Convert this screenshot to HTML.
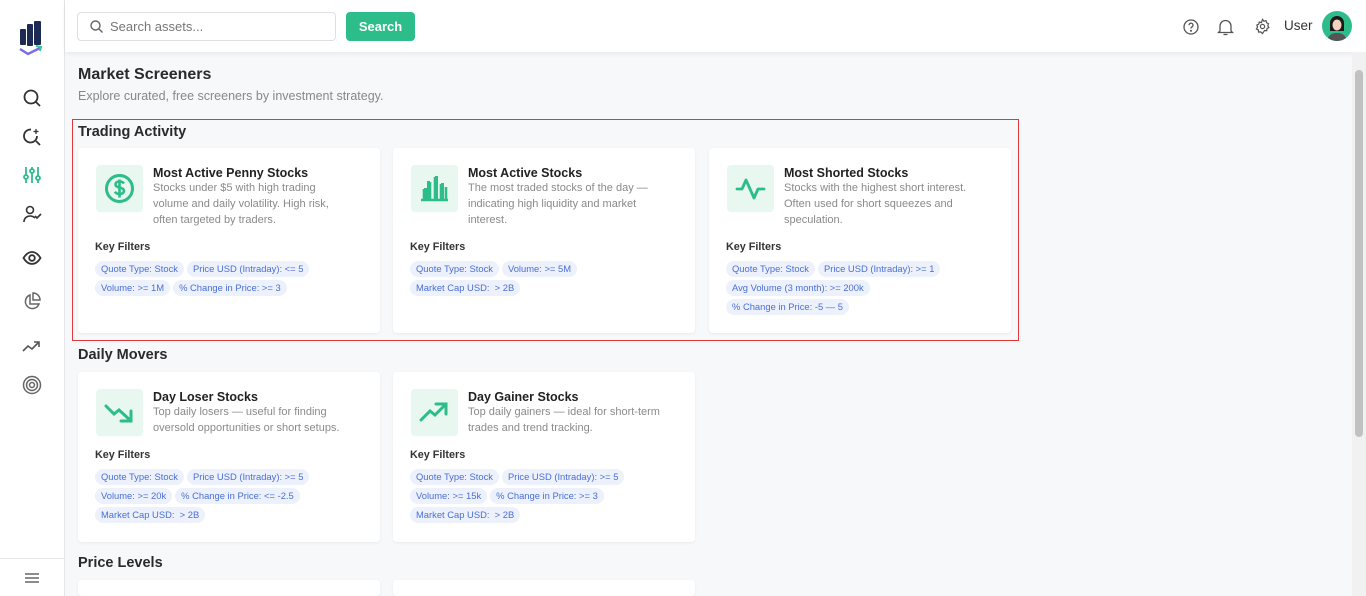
<!DOCTYPE html>
<html><head><style>
*{box-sizing:border-box;margin:0;padding:0}
html{width:1366px;height:596px;overflow:hidden}
body{width:1366px;height:596px;overflow:hidden;font-family:"Liberation Sans",sans-serif;background:#f7f8fa;position:relative;color:#222}
.side{position:absolute;left:0;top:0;width:65px;height:596px;background:#fff;border-right:1px solid #e4e6ea}
.side svg{position:absolute;left:22px}
.top{position:absolute;left:65px;top:0;right:0;height:52px;background:#fff;box-shadow:0 2px 4px rgba(0,0,0,.06)}
.search{position:absolute;left:12px;top:12px;width:259px;height:29px;border:1px solid #dcdfe3;border-radius:4px;font-size:13px;color:#777;padding:6px 0 0 32px}
.btn{position:absolute;left:281px;top:12px;width:69px;height:29px;background:#2dbd8a;border-radius:4px;color:#fff;font-weight:bold;font-size:13px;text-align:center;line-height:29px}
.h1{position:absolute;left:78px;top:66px;font-size:16px;font-weight:bold;color:#2a2a2a}
.sub{position:absolute;left:78px;top:89px;font-size:12.5px;color:#888}
.h2{position:absolute;left:78px;font-size:14.5px;font-weight:bold;color:#2a2a2a}
.red{position:absolute;left:72px;top:119px;width:947px;height:222px;border:1px solid #e0383d}
.card{position:absolute;width:302px;background:#fff;border-radius:4px;box-shadow:0 1px 3px rgba(0,0,0,.06);overflow:hidden}
.ic{position:absolute;left:18px;top:17px;width:47px;height:47px;background:#e8f8f1;border-radius:4px}
.ic svg{position:absolute;left:8px;top:8px}
.t{position:absolute;left:75px;top:18px;font-size:12.5px;font-weight:bold;color:#222}
.d{position:absolute;left:75px;top:32px;width:190px;font-size:11px;line-height:16px;color:#8a8a8a}
.kf{position:absolute;left:17px;font-size:10.8px;font-weight:bold;color:#333}
.chips{position:absolute;left:17px;width:280px;display:flex;flex-wrap:wrap;gap:3px}
.chip{display:block;height:16px;line-height:16px;padding:0 6px;font-size:9.4px;color:#4a6fd6;background:#edf1fc;border-radius:8px;white-space:nowrap}
.scroll{position:absolute;right:0;top:52px;width:14px;height:544px;background:#f1f1f1}
.thumb{position:absolute;right:3px;top:18px;width:8px;height:367px;background:#c1c1c1;border-radius:4px}
</style></head><body>
<div class="side">
<svg style="top:19px;left:17px" width="28" height="40" viewBox="0 0 28 40"><rect x="3" y="10" width="6" height="16" rx="1" fill="#1d2b52"/><rect x="10" y="5" width="6" height="22" rx="1" fill="#1d2b52"/><rect x="17" y="2" width="7" height="24" rx="1" fill="#1d2b52"/><path d="M3 30l8 5 12-6" stroke="#7b6ee6" stroke-width="2.5" fill="none"/><path d="M19 27l5 1-1 4" stroke="#3cc48e" stroke-width="2" fill="none"/></svg>
<svg style="top:88px" width="20" height="20" viewBox="0 0 20 20" fill="none" stroke="#333" stroke-width="1.8"><circle cx="9" cy="9" r="6.5"/><path d="M14 14l4 4"/></svg>
<svg style="top:127px" width="20" height="20" viewBox="0 0 20 20" fill="none" stroke="#333" stroke-width="1.8"><path d="M15 9a6.5 6.5 0 1 1-6-6.5"/><path d="M14 14l4 4"/><path d="M14 2v5M11.5 4.5h5" stroke-width="1.3"/></svg>
<svg style="top:165px" width="20" height="20" viewBox="0 0 20 20" fill="none" stroke="#2dbd8a" stroke-width="1.8"><path d="M4 2v16M10 2v16M16 2v16"/><circle cx="4" cy="12" r="2" fill="#fff"/><circle cx="10" cy="6" r="2" fill="#fff"/><circle cx="16" cy="13" r="2" fill="#fff"/></svg>
<svg style="top:204px" width="20" height="20" viewBox="0 0 20 20" fill="none" stroke="#333" stroke-width="1.6"><circle cx="8" cy="6" r="3.5"/><path d="M2 18c0-4 3-6 6-6s4 1 5 2"/><path d="M13 12l2 2 4-4"/></svg>
<svg style="top:248px" width="20" height="20" viewBox="0 0 20 20" fill="none" stroke="#333" stroke-width="1.8"><path d="M1.5 10c2.5-4 5.5-6 8.5-6s6 2 8.5 6c-2.5 4-5.5 6-8.5 6s-6-2-8.5-6z"/><circle cx="10" cy="10" r="2.8"/></svg>
<svg style="top:292px" width="20" height="20" viewBox="0 0 20 20" fill="none" stroke="#666" stroke-width="1.5"><path d="M8 3a7 7 0 1 0 9 9H8z"/><path d="M11 1a7 7 0 0 1 7 7h-7z"/></svg>
<svg style="top:338px" width="20" height="18" viewBox="0 0 20 18" fill="none" stroke="#555" stroke-width="1.6"><path d="M1 13l5-5 4 3 7-7"/><path d="M12 4h5v5"/></svg>
<svg style="top:375px" width="20" height="20" viewBox="0 0 20 20" fill="none" stroke="#666" stroke-width="1.5"><circle cx="10" cy="10" r="8.5"/><circle cx="10" cy="10" r="5.5"/><circle cx="10" cy="10" r="2.5"/></svg>
<div style="position:absolute;left:0;top:558px;width:64px;border-top:1px solid #e4e6ea"></div>
<svg style="top:572px;left:25px" width="14" height="12" viewBox="0 0 14 12" stroke="#666" stroke-width="1.4"><path d="M0 2h14M0 6h14M0 10h14"/></svg>
</div>
<div class="top">
<div class="search"><svg style="position:absolute;left:12px;top:7px" width="13" height="13" viewBox="0 0 13 13" fill="none" stroke="#666" stroke-width="1.4"><circle cx="5.5" cy="5.5" r="4.5"/><path d="M9 9l3.5 3.5"/></svg>Search assets...</div>
<div class="btn">Search</div>
<svg style="position:absolute;left:1118px;top:19px" width="16" height="16" viewBox="0 0 16 16" fill="none" stroke="#555" stroke-width="1.3"><circle cx="8" cy="8" r="7"/><path d="M6 6.2a2 2 0 1 1 2.5 1.9c-.5.2-.5.6-.5 1.4"/><circle cx="8" cy="11.8" r=".4" fill="#555"/></svg>
<svg style="position:absolute;left:1152px;top:18px" width="17" height="18" viewBox="0 0 17 18" fill="none" stroke="#555" stroke-width="1.3"><path d="M3 13V8a5.5 5.5 0 0 1 11 0v5l1.5 1.5h-14z"/><path d="M6.5 16.5h4"/></svg>
<svg style="position:absolute;left:1189px;top:18px" width="17" height="17" viewBox="0 0 24 24" fill="none" stroke="#555" stroke-width="1.7"><circle cx="12" cy="12" r="3"/><path d="M12 2l2 2.5 3-.8.8 3L20.5 8l-1 3 1.5 2.5-2.7 1.3-.3 3.1-3.1-.3L12 22l-2.5-2.4-3.1.3-.3-3.1L3.4 15.5 5 13l-1-3 2.7-1.3.8-3 3 .8z"/></svg>
<div style="position:absolute;left:1219px;top:18px;font-size:13.5px;color:#333">User</div>
<svg style="position:absolute;left:1257px;top:11px" width="30" height="30" viewBox="0 0 30 30"><circle cx="15" cy="15" r="15" fill="#2dbd8a"/><path d="M6 27c2-4 5-5 9-5s7 1 9 5a15 15 0 0 1-18 0z" fill="#555"/><path d="M8 20V12a7 7 0 0 1 14 0v8z" fill="#1a1a1a"/><ellipse cx="15" cy="14" rx="4.5" ry="5.5" fill="#f3d3c0"/><path d="M10 11q5-5 10 0v-2q-5-4-10 0z" fill="#1a1a1a"/></svg>
</div>
<div class="scroll"><div class="thumb"></div></div>
<div class="h1">Market Screeners</div>
<div class="sub">Explore curated, free screeners by investment strategy.</div>
<div class="red"></div>
<div class="h2" style="top:124px">Trading Activity</div>
<div class="h2" style="top:347px">Daily Movers</div>
<div class="h2" style="top:555px">Price Levels</div>

<div class="card" style="left:78px;top:148px;height:185px">
<div class="ic"><svg width="31" height="31" viewBox="0 0 31 31" fill="none" stroke="#2dbd8a" stroke-width="3"><circle cx="15.5" cy="15.5" r="13"/><path d="M20 10.5c-1-1.3-2.5-2-4.5-2-2.5 0-4 1.3-4 3s1.5 2.5 4 3 4.5 1.3 4.5 3.3-2 3.2-4.5 3.2c-2 0-3.7-.8-4.7-2.2M15.5 6.5v18" stroke-width="2.6"/></svg></div>
<div class="t">Most Active Penny Stocks</div>
<div class="d">Stocks under $5 with high trading volume and daily volatility. High risk, often targeted by traders.</div>
<div class="kf" style="top:93px">Key Filters</div>
<div class="chips" style="top:113px"><span class="chip">Quote Type: Stock</span><span class="chip">Price USD (Intraday): &lt;= 5</span><span class="chip">Volume: &gt;= 1M</span><span class="chip">% Change in Price: &gt;= 3</span></div>
</div>
<div class="card" style="left:393px;top:148px;height:185px">
<div class="ic"><svg width="31" height="31" viewBox="0 0 31 31" fill="none" stroke="#2dbd8a" stroke-width="2.6"><path d="M2 27h27M5 26v-10M11 26V9M16 26V4M22 26V11M27 26v-12"/><path d="M5 16h2v10M16 4h2v22M22 11h2v15M11 9h-2v17" stroke-width="2"/></svg></div>
<div class="t">Most Active Stocks</div>
<div class="d">The most traded stocks of the day — indicating high liquidity and market interest.</div>
<div class="kf" style="top:93px">Key Filters</div>
<div class="chips" style="top:113px"><span class="chip">Quote Type: Stock</span><span class="chip">Volume: &gt;= 5M</span><span class="chip">Market Cap USD: &nbsp;&gt; 2B</span></div>
</div>
<div class="card" style="left:709px;top:148px;height:185px">
<div class="ic"><svg width="31" height="31" viewBox="0 0 31 31" fill="none" stroke="#2dbd8a" stroke-width="2.8" stroke-linejoin="round" stroke-linecap="round"><path d="M2 16h5l4-9 8 18 4-9h6"/></svg></div>
<div class="t">Most Shorted Stocks</div>
<div class="d">Stocks with the highest short interest. Often used for short squeezes and speculation.</div>
<div class="kf" style="top:93px">Key Filters</div>
<div class="chips" style="top:113px;width:250px"><span class="chip">Quote Type: Stock</span><span class="chip">Price USD (Intraday): &gt;= 1</span><span class="chip">Avg Volume (3 month): &gt;= 200k</span><span class="chip">% Change in Price: -5 — 5</span></div>
</div>

<div class="card" style="left:78px;top:372px;height:170px">
<div class="ic"><svg width="31" height="31" viewBox="0 0 31 31" fill="none" stroke="#2dbd8a" stroke-width="3" stroke-linecap="round"><path d="M2 9l8 8 5-4 11 10"/><path d="M17 24h10V14"/></svg></div>
<div class="t">Day Loser Stocks</div>
<div class="d" style="width:200px">Top daily losers — useful for finding oversold opportunities or short setups.</div>
<div class="kf" style="top:77px">Key Filters</div>
<div class="chips" style="top:97px;width:240px"><span class="chip">Quote Type: Stock</span><span class="chip">Price USD (Intraday): &gt;= 5</span><span class="chip">Volume: &gt;= 20k</span><span class="chip">% Change in Price: &lt;= -2.5</span><span class="chip">Market Cap USD: &nbsp;&gt; 2B</span></div>
</div>
<div class="card" style="left:393px;top:372px;height:170px">
<div class="ic"><svg width="31" height="31" viewBox="0 0 31 31" fill="none" stroke="#2dbd8a" stroke-width="3" stroke-linecap="round"><path d="M2 23l9-9 5 4 11-11"/><path d="M17 7h10v10"/></svg></div>
<div class="t">Day Gainer Stocks</div>
<div class="d" style="width:205px">Top daily gainers — ideal for short-term trades and trend tracking.</div>
<div class="kf" style="top:77px">Key Filters</div>
<div class="chips" style="top:97px;width:240px"><span class="chip">Quote Type: Stock</span><span class="chip">Price USD (Intraday): &gt;= 5</span><span class="chip">Volume: &gt;= 15k</span><span class="chip">% Change in Price: &gt;= 3</span><span class="chip">Market Cap USD: &nbsp;&gt; 2B</span></div>
</div>
<div class="card" style="left:78px;top:580px;height:16px"></div>
<div class="card" style="left:393px;top:580px;height:16px"></div>
</body></html>
